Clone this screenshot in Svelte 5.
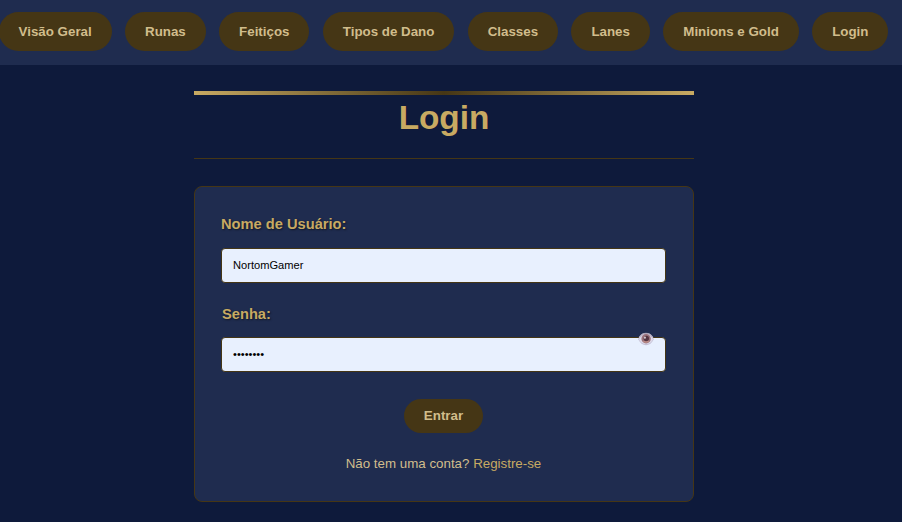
<script>
  const links = ['Visão Geral', 'Runas', 'Feitiços', 'Tipos de Dano', 'Classes', 'Lanes', 'Minions e Gold', 'Login'];
  let username = $state('NortomGamer');
  let password = $state('password');
  let visible = $state(false);
</script>

<div class="page">
  <nav>
    {#each links as link}
      <a class="pill" href="#top">{link}</a>
    {/each}
  </nav>

  <main>
    <header>
      <h1>Login</h1>
    </header>

    <form onsubmit={(e) => e.preventDefault()}>
      <label for="user">Nome de Usuário:</label>
      <div class="field">
        <input id="user" type="text" bind:value={username} />
      </div>

      <label class="second" for="pass">Senha:</label>
      <div class="field secret">
        <input id="pass" type={visible ? 'text' : 'password'} bind:value={password} />
        <button class="eye" type="button" aria-label="Mostrar senha" onclick={() => (visible = !visible)}>
          <svg width="16" height="14" viewBox="0 0 16 14">
            <path d="M.3 7.500C.8 3.500 4 1 8 1s7.200 2.500 7.700 6.500C14 11 11.300 13.200 8 13.200S2 11 .3 7.500Z" fill="#c5c0d6" />
            <path d="M1 7.500C2.400 4.600 5 3 8 3s5.600 1.600 7 4.500C13.400 10.600 11 12 8 12S2.600 10.600 1 7.500Z" fill="#dedbea" />
            <path d="M1.600 5C3 2.300 5.300 1.300 8 1.300s5 1 6.400 3.700" fill="none" stroke="#aaa4b5" stroke-width="1" />
            <circle cx="8.100" cy="6.800" r="4.700" fill="#99727a" />
            <circle cx="8.300" cy="6.500" r="2.700" fill="#553541" />
            <circle cx="6.900" cy="5.700" r="1.100" fill="#d0c4cc" />
            <path d="M5.400 9.300Q8 11.200 10.900 9" fill="none" stroke="#c08f88" stroke-width="1.200" />
          </svg>
        </button>
      </div>

      <button class="pill submit" type="submit">Entrar</button>
      <p>Não tem uma conta? <a href="#registro">Registre-se</a></p>
    </form>
  </main>
</div>

<style>
  :global(body) {
    margin: 0;
    background: #0e1a3b;
    overflow: hidden;
  }
  .page {
    width: 888px;
    height: 522px;
    font-family: "Liberation Sans", Arial, sans-serif;
    font-size: 13.333px;
    color: #d1bd8c;
  }
  nav {
    display: flex;
    justify-content: center;
    gap: 13.333px;
    box-sizing: border-box;
    width: 902px;
    height: 65px;
    padding: 12px 15px 14px 0;
    background: #1f2c4f;
  }
  .pill {
    display: flex;
    flex: none;
    align-items: center;
    box-sizing: border-box;
    height: 39px;
    padding: 0 20px;
    border: 0;
    border-radius: 20px;
    background: #453615;
    color: #d1bd8c;
    font: bold 13.333px "Liberation Sans", Arial, sans-serif;
    text-decoration: none;
    white-space: nowrap;
  }
  main {
    width: 500px;
    margin: 26px auto 0;
  }
  header {
    box-sizing: border-box;
    height: 68px;
    border-bottom: 1px solid #453615;
  }
  header::before {
    content: "";
    display: block;
    height: 4px;
    background: linear-gradient(90deg, #c8aa62, #453615, #c8aa62);
  }
  h1 {
    margin: 0;
    padding-top: 3px;
    text-align: center;
    font-size: 33.333px;
    line-height: 40px;
    color: #c8aa62;
  }
  form {
    display: flex;
    flex-direction: column;
    box-sizing: border-box;
    height: 316px;
    margin-top: 27px;
    padding: 27px 27px 0 26px;
    border: 1px solid #453615;
    border-radius: 8px;
    background: #1f2c4f;
  }
  label {
    height: 20px;
    line-height: 20px;
    font-size: 14.667px;
    font-weight: bold;
    color: #c8aa62;
    text-shadow: 1px 1px 2px rgba(0, 0, 0, 0.5);
  }
  .field {
    position: relative;
    margin-top: 14px;
  }
  .secret {
    margin-top: 13px;
  }
  input {
    display: block;
    box-sizing: border-box;
    width: 445px;
    height: 35px;
    margin: 0;
    padding: 0 11px 2px;
    border: 1px solid #453615;
    border-radius: 4px;
    outline: 0;
    background: #e8f0fe;
    color: #000;
    font: 11.111px "Liberation Sans", Arial, sans-serif;
  }
  .second {
    margin-top: 21px;
    padding-left: 1px;
  }
  .eye {
    position: absolute;
    top: -5px;
    right: 12px;
    display: block;
    width: 16px;
    height: 14px;
    padding: 0;
    border: 0;
    background: none;
  }
  .eye svg {
    display: block;
  }
  .submit {
    align-self: center;
    height: 34px;
    margin-top: 27px;
    padding-bottom: 2px;
  }
  p {
    margin: 21px 0 0;
    line-height: 20px;
    text-align: center;
  }
  p a {
    color: #c8aa62;
    text-decoration: none;
  }
</style>
